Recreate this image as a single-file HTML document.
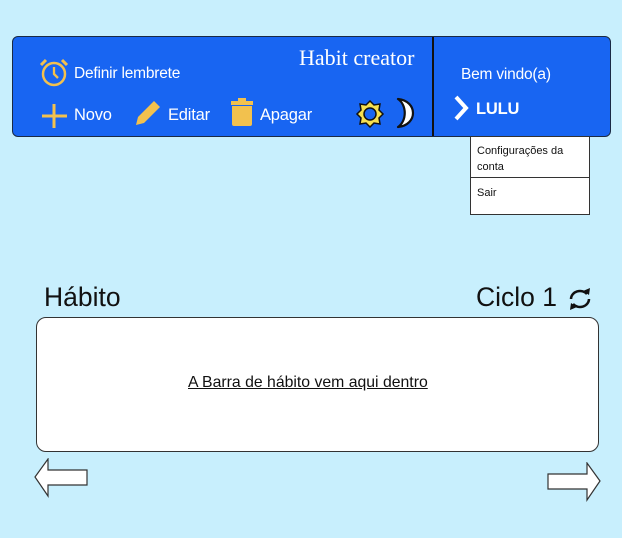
<!DOCTYPE html>
<html><head><style>
body{margin:0;width:622px;height:538px;background:#c8effd;font-family:"Liberation Sans",sans-serif;position:relative;overflow:hidden}
.a{position:absolute}
#hdr{left:12px;top:36px;width:597px;height:99px;background:#1865f2;border:1px solid #1a2a44;border-radius:6px}
.t{color:#fff;font-size:16.5px;letter-spacing:-0.2px}
</style></head><body>
<div id="hdr" class="a"></div>
<div class="a" style="left:432px;top:37px;width:2px;height:99px;background:#111"></div>
<svg class="a" style="left:39px;top:58px" width="30" height="30" viewBox="0 0 30 30"><circle cx="15" cy="16" r="11" fill="none" stroke="#f2c14e" stroke-width="2.5"/><path d="M15 9v7l4 4" fill="none" stroke="#f2c14e" stroke-width="2.3"/><path d="M2 7l5-5M28 7l-5-5" stroke="#f2c14e" stroke-width="3"/></svg>
<div class="a t" style="left:74px;top:65px;font-size:15.5px">Definir lembrete</div>
<svg class="a" style="left:41px;top:102px" width="26" height="26"><path d="M13 2v24M1 14h25" stroke="#f2c14e" stroke-width="3"/></svg>
<div class="a t" style="left:74px;top:106px">Novo</div>
<svg class="a" style="left:133px;top:98px" width="30" height="30"><path d="M3 27l2-8L21 3l6 6L11 25z" fill="#f2c14e"/></svg>
<div class="a t" style="left:168px;top:106px">Editar</div>
<svg class="a" style="left:230px;top:98px" width="24" height="30"><rect x="1" y="3" width="22" height="4" fill="#f2c14e"/><rect x="8" y="0" width="8" height="4" fill="#f2c14e"/><path d="M2 8h20v18q0 2-2 2H4q-2 0-2-2z" fill="#f2c14e"/></svg>
<div class="a t" style="left:260px;top:106px">Apagar</div>
<div class="a" style="left:299px;top:45px;color:#fff;font-family:'Liberation Serif',serif;font-size:22px">Habit creator</div>
<svg class="a" style="left:355px;top:99px" width="30" height="30" viewBox="0 0 30 30"><polygon points="15,2 19,6 25,5 24,11 28,15 24,19 25,25 19,24 15,28 11,24 5,25 6,19 2,15 6,11 5,5 11,6" fill="#f5e050" stroke="#111" stroke-width="1.5"/><circle cx="15" cy="15" r="6" fill="#1865f2" stroke="#111" stroke-width="1.5"/></svg>
<svg class="a" style="left:394px;top:97px" width="26" height="32"><path d="M4 2C24 4 24 28 4 30C13 24 13 8 4 2Z" fill="#fff" stroke="#111" stroke-width="2.2" stroke-linejoin="round"/></svg>
<div class="a t" style="left:461px;top:66px;font-size:15.5px">Bem vindo(a)</div>
<svg class="a" style="left:453px;top:95px" width="18" height="26"><path d="M3 2l10 11L3 24" fill="none" stroke="#fff" stroke-width="4"/></svg>
<div class="a t" style="left:476px;top:100px;font-weight:bold">LULU</div>
<div class="a" style="left:470px;top:136px;width:118px;height:77px;background:#fff;border:1px solid #333;font-size:11px;color:#111">
<div style="padding:6px 6px;line-height:16px;height:28px;border-bottom:1px solid #333">Configurações da conta</div>
<div style="padding:9px 6px">Sair</div></div>
<div class="a" style="left:44px;top:282px;font-size:26.5px;color:#111">Hábito</div>
<div class="a" style="left:476px;top:282px;font-size:26.5px;color:#111">Ciclo 1</div>
<svg class="a" style="left:566px;top:287px" width="28" height="24" viewBox="0 0 28 24"><path d="M5 12a9 8 0 0 1 16-5" fill="none" stroke="#111" stroke-width="2.5"/><path d="M23 12a9 8 0 0 1-16 5" fill="none" stroke="#111" stroke-width="2.5"/><path d="M17 4l6 4 1-7z" fill="#111"/><path d="M11 20l-6-4-1 7z" fill="#111"/></svg>
<div class="a" style="left:36px;top:317px;width:561px;height:133px;background:#fff;border:1.5px solid #333;border-radius:10px"></div>
<div class="a" style="left:188px;top:374px;font-size:15.8px;color:#111;text-decoration:underline">A Barra de hábito vem aqui dentro</div>
<svg class="a" style="left:34px;top:458px" width="56" height="40"><path d="M1 19L14 1v11h39v15H14v11z" fill="#fff" stroke="#333" stroke-width="1.2"/></svg>
<svg class="a" style="left:545px;top:462px" width="56" height="40"><path d="M55 19L42 1v11H3v15h39v11z" fill="#fff" stroke="#333" stroke-width="1.2"/></svg>
</body></html>
